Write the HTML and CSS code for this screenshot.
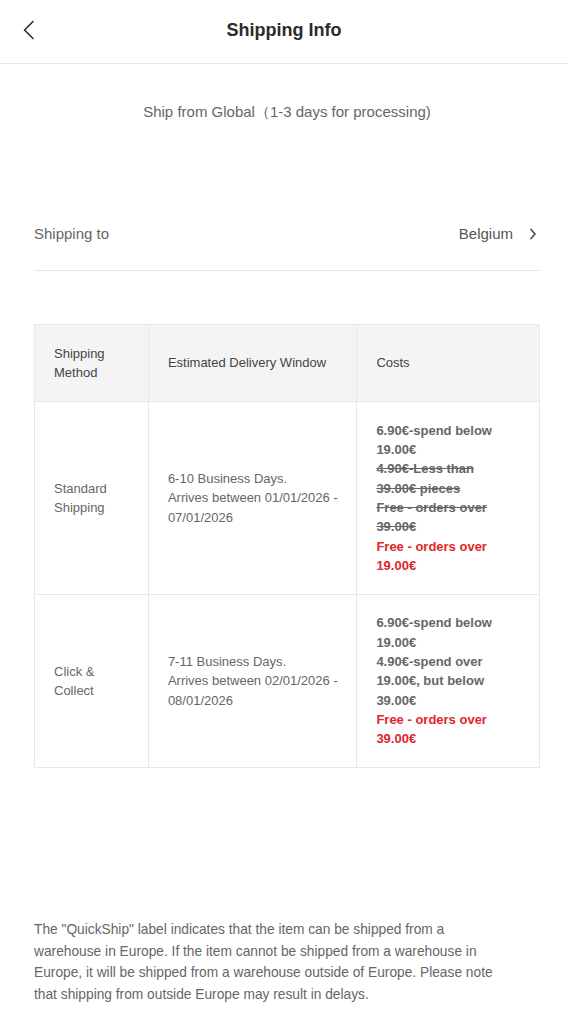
FILE: index.html
```html
<!DOCTYPE html>
<html lang="en">
<head>
<meta charset="utf-8">
<title>Shipping Info</title>
<link rel="stylesheet" href="styles.css">
</head>
<body>
<header class="topbar">
  <button class="back" aria-label="Back">
    <svg width="14" height="20" viewBox="0 0 14 20"><path d="M11 1.5 L2.5 10 L11 18.5" fill="none" stroke="#333" stroke-width="1.7" stroke-linecap="round" stroke-linejoin="round"/></svg>
  </button>
  <h1 class="title">Shipping Info</h1>
</header>
<main class="content">
  <p class="ship-from">Ship from Global（1-3 days for processing)</p>
  <div class="ship-to">
    <span class="ship-to-label">Shipping to</span>
    <span class="ship-to-value">Belgium
      <svg width="8" height="12" viewBox="0 0 8 12"><path d="M2 1.5 L6 6 L2 10.5" fill="none" stroke="#555" stroke-width="1.8" stroke-linecap="round" stroke-linejoin="round"/></svg>
    </span>
  </div>
  <table class="rates">
    <thead>
      <tr>
        <th class="c1">Shipping Method</th>
        <th class="c2">Estimated Delivery Window</th>
        <th class="c3">Costs</th>
      </tr>
    </thead>
    <tbody>
      <tr class="r1">
        <td>Standard Shipping</td>
        <td class="window">6-10 Business Days.<br>Arrives between 01/01/2026 - 07/01/2026</td>
        <td class="cost">
          <div>6.90€-spend below 19.00€</div>
          <div class="old">4.90€-Less than 39.00€ pieces</div>
          <div class="old">Free - orders over 39.00€</div>
          <div class="hot">Free - orders over 19.00€</div>
        </td>
      </tr>
      <tr class="r2">
        <td>Click &amp; Collect</td>
        <td class="window">7-11 Business Days.<br>Arrives between 02/01/2026 - 08/01/2026</td>
        <td class="cost">
          <div>6.90€-spend below 19.00€</div>
          <div>4.90€-spend over 19.00€, but below 39.00€</div>
          <div class="hot">Free - orders over 39.00€</div>
        </td>
      </tr>
    </tbody>
  </table>
  <p class="note">The "QuickShip" label indicates that the item can be shipped from a warehouse in Europe. If the item cannot be shipped from a warehouse in Europe, it will be shipped from a warehouse outside of Europe. Please note that shipping from outside Europe may result in delays.</p>
</main>
</body>
</html>
```

FILE: styles.css
```css
* { box-sizing: border-box; }
html, body { margin: 0; padding: 0; background: #fff; }
body {
  font-family: "Liberation Sans", Arial, Helvetica, sans-serif;
  color: #666;
  width: 568px;
}
.topbar {
  height: 64px;
  border-bottom: 1px solid #e8e8e8;
  display: flex;
  align-items: center;
  justify-content: center;
  position: relative;
}
.back {
  position: absolute;
  left: 22px;
  top: 20px;
  width: 14px;
  height: 20px;
  padding: 0;
  border: 0;
  background: none;
  display: flex;
}
.title {
  margin: 0;
  font-size: 18px;
  font-weight: 700;
  color: #2b2b2b;
  line-height: 24px;
  padding-bottom: 4px;
}
.content {
  padding: 0 28px 0 34px;
}
.ship-from {
  margin: 38px 0 0;
  text-align: center;
  font-size: 15px;
  line-height: 20px;
  color: #666;
}
.ship-to {
  margin-top: 76px;
  height: 73px;
  border-bottom: 1px solid #e6e6e6;
  display: flex;
  justify-content: space-between;
  align-items: center;
  font-size: 15px;
  color: #666;
  padding-bottom: 1px;
}
.ship-to-value {
  display: flex;
  align-items: center;
  gap: 16px;
  color: #555;
  padding-right: 3px;
}
.rates {
  margin-top: 53px;
  width: 506px;
  border-collapse: collapse;
  font-size: 13px;
  line-height: 19.3px;
  color: #666;
}
.rates th, .rates td {
  border: 1px solid #e8e8e8;
  text-align: left;
  vertical-align: middle;
  padding: 0 19px 0 19px;
  font-weight: 400;
}
.rates thead th {
  background: #f4f4f4;
  height: 77px;
  color: #444;
}
.c1 { width: 114px; }
.c2 { width: 209px; }
.c3 { width: 183px; }
.rates td.window { padding-right: 8px; }
.r1 td { height: 193px; }
.r2 td { height: 173px; }
.rates td.cost { font-weight: 700; color: #666; padding-right: 30px; }
.cost .old { text-decoration: line-through; }
.cost .hot { color: #e0262b; }
.note {
  margin: 151px 0 0;
  max-width: 470px;
  font-size: 13.75px;
  line-height: 21.5px;
  color: #666;
}
```
